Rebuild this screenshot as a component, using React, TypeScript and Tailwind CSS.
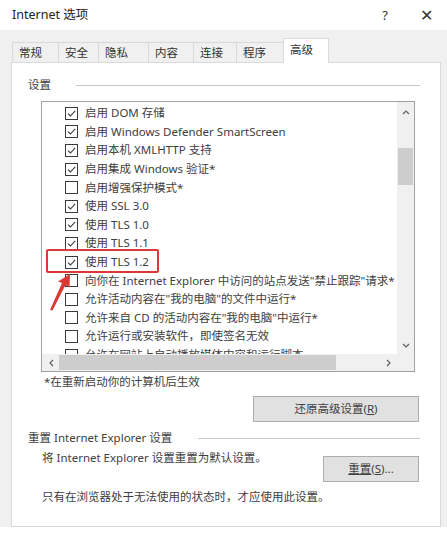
import React from 'react';

const font = { fontFamily: '"Noto Sans", "Noto Sans CJK SC", sans-serif' };

const tabs = ['常规', '安全', '隐私', '内容', '连接', '程序'];
const tabWidths = ['w-[46px]', 'w-[40px]', 'w-[50px]', 'w-[45px]', 'w-[43px]', 'w-[47px]'];

const options = [
  { label: '启用 DOM 存储', checked: true },
  { label: '启用 Windows Defender SmartScreen', checked: true },
  { label: '启用本机 XMLHTTP 支持', checked: true },
  { label: '启用集成 Windows 验证*', checked: true },
  { label: '启用增强保护模式*', checked: false },
  { label: '使用 SSL 3.0', checked: true },
  { label: '使用 TLS 1.0', checked: true },
  { label: '使用 TLS 1.1', checked: true },
  { label: '使用 TLS 1.2', checked: true },
  { label: '向你在 Internet Explorer 中访问的站点发送"禁止跟踪"请求*', checked: false },
  { label: '允许活动内容在"我的电脑"的文件中运行*', checked: false },
  { label: '允许来自 CD 的活动内容在"我的电脑"中运行*', checked: false },
  { label: '允许运行或安装软件，即使签名无效', checked: false },
  { label: '允许在网站上自动播放媒体内容和运行脚本', checked: false },
];

const CheckBox = ({ checked }: { checked: boolean }) => (
  <span className="flex h-[13px] w-[13px] shrink-0 items-center justify-center border border-[#3a3a3a] bg-white">
    {checked && (
      <svg viewBox="0 0 11 11" className="h-[11px] w-[11px]">
        <path d="M2 5.6 L4.4 8 L9.2 2.8" fill="none" stroke="#3a3a3a" strokeWidth="1.1" />
      </svg>
    )}
  </span>
);

const App = () => {
  return (
    <div className="relative h-[535px] w-[447px] overflow-hidden bg-white text-[11.5px] leading-[16px] text-[#404040]" style={font}>
      {/* title bar */}
      <div className="flex h-[30px] items-center bg-white pl-[12px]">
        <span className="text-[12.5px] text-[#222]">Internet 选项</span>
        <span className="ml-auto mr-[32px] text-[13px] text-[#333]">?</span>
        <span className="mr-[14px] text-[16px] font-light text-[#333]">✕</span>
      </div>

      {/* body */}
      <div className="h-[497px] bg-[#f0f0f0] pt-[8px]">
        {/* tabs */}
        <div className="flex h-[24px] items-end pl-[12px]">
          {tabs.map((t, i) => (
            <div
              key={t}
              className={`${tabWidths[i]} flex h-[20px] items-center border-t border-l border-[#d9d9d9] bg-[#f0f0f0] pl-[6px] text-[#333]`}
            >
              {t}
            </div>
          ))}
          <div className="relative z-10 mb-[-1px] flex h-[25px] w-[46px] items-start border border-b-0 border-[#d9d9d9] bg-white pl-[6px] pt-[3px] text-[#333]">
            高级
          </div>
        </div>

        {/* panel */}
        <div className="ml-[11px] flex h-[465px] w-[430px] flex-col border border-[#d9d9d9] bg-white">
          {/* 设置 group */}
          <div className="mt-[14px] flex items-center pl-[16px] pr-[20px]">
            <span>设置</span>
            <div className="ml-[25px] h-px flex-1 bg-[#c8c8c8]" />
          </div>

          {/* list box */}
          <div className="relative ml-[29px] mt-[8px] flex h-[271px] w-[374px] flex-col border border-[#a0a0a0]">
            <div className="flex min-h-0 flex-1">
              <div className="flex-1 overflow-hidden pt-[2px] pl-[23px]">
                {options.map((o) => (
                  <div key={o.label} className="flex h-[18.6px] items-center gap-[7px] whitespace-nowrap">
                    <CheckBox checked={o.checked} />
                    <span>{o.label}</span>
                  </div>
                ))}
              </div>
              {/* vertical scrollbar */}
              <div className="flex w-[17px] flex-col items-center bg-[#f0f0f0]">
                <svg viewBox="0 0 8 5" className="mt-[8px] h-[5px] w-[8px]">
                  <path d="M1 4 L4 1 L7 4" fill="none" stroke="#606060" strokeWidth="1.2" />
                </svg>
                <div className="mt-[33px] h-[37px] w-[15px] bg-[#cdcdcd]" />
                <svg viewBox="0 0 8 5" className="mb-[6px] mt-auto h-[5px] w-[8px]">
                  <path d="M1 1 L4 4 L7 1" fill="none" stroke="#606060" strokeWidth="1.2" />
                </svg>
              </div>
            </div>
            {/* horizontal scrollbar */}
            <div className="flex h-[17px] items-center bg-[#f0f0f0]">
              <svg viewBox="0 0 5 8" className="ml-[7px] h-[8px] w-[5px]">
                <path d="M4 1 L1 4 L4 7" fill="none" stroke="#606060" strokeWidth="1.2" />
              </svg>
              <div className="ml-[5px] h-[15px] w-[277px] bg-[#cdcdcd]" />
              <svg viewBox="0 0 5 8" className="ml-[50px] h-[8px] w-[5px]">
                <path d="M1 1 L4 4 L1 7" fill="none" stroke="#606060" strokeWidth="1.2" />
              </svg>
              <div className="ml-auto h-[17px] w-[17px] bg-[#f0f0f0]" />
            </div>

            {/* red highlight annotation */}
            <div className="absolute left-[4px] top-[147px] h-[24px] w-[113px] rounded-[2px] border-2 border-[#d93a36]" />
            <svg className="absolute left-[6px] top-[171px]" width="26" height="38" viewBox="0 0 26 38">
              <path d="M2 37 L14 10 L10 8.5 L22 1 L21.5 14.5 L17.5 12 L4.5 37.5 Z" fill="#d93a36" />
            </svg>
          </div>

          <div className="ml-[32px] mt-[2px]">*在重新启动你的计算机后生效</div>

          <div className="mt-[6px] flex justify-end pr-[21px]">
            <button className="flex h-[26px] w-[166px] items-center justify-center border border-[#adadad] bg-[#e1e1e1]">
              还原高级设置(<span className="underline">R</span>)
            </button>
          </div>

          {/* reset group */}
          <div className="mt-[8px] flex items-center pl-[16px] pr-[20px]">
            <span>重置 Internet Explorer 设置</span>
            <div className="ml-[26px] h-px flex-1 bg-[#c8c8c8]" />
          </div>

          <div className="mt-[4px] flex items-start pl-[30px] pr-[21px]">
            <span>将 Internet Explorer 设置重置为默认设置。</span>
            <button className="ml-auto mt-[6px] flex h-[26px] w-[96px] items-center justify-center border border-[#adadad] bg-[#e1e1e1]">
              <span className="underline">重置</span>(<span className="underline">S</span>)...
            </button>
          </div>

          <div className="ml-[30px] mt-[7px]">只有在浏览器处于无法使用的状态时，才应使用此设置。</div>
        </div>
      </div>
    </div>
  );
};

export default App;
